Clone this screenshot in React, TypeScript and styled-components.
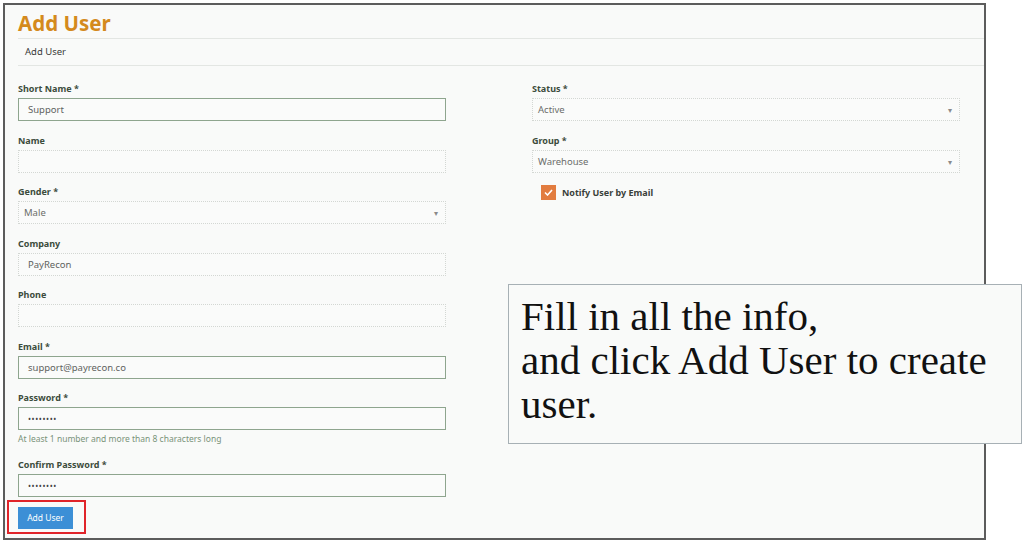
import React from 'react';
import styled, { createGlobalStyle } from 'styled-components';

const GlobalStyle = createGlobalStyle`
  html, body {
    margin: 0;
    padding: 0;
    background: #ffffff;
  }
  body {
    font-family: 'Noto Sans', 'Open Sans', Arial, sans-serif;
  }
`;

const Page = styled.div`
  position: relative;
  width: 1024px;
  height: 542px;
  overflow: hidden;
`;

const Frame = styled.div`
  box-sizing: border-box;
  margin: 3px 0 0 3px;
  width: 983px;
  height: 537px;
  border: 2px solid #5c5c5c;
  background: #f9faf9;
  padding: 0 0 0 13px;
`;

const Title = styled.h1`
  margin: 0;
  height: 33px;
  line-height: 36px;
  font-size: 20.5px;
  font-weight: 700;
  color: #d48a1d;
  border-bottom: 1px solid #e3e6e3;
`;

const Breadcrumb = styled.div`
  height: 26px;
  line-height: 26px;
  padding-left: 7px;
  font-size: 9.5px;
  color: #3a3a3a;
  border-bottom: 1px solid #e3e6e3;
`;

const FormGrid = styled.form`
  display: grid;
  grid-template-columns: 428px 428px;
  column-gap: 86px;
  padding-top: 16px;
  align-items: start;
`;

const Column = styled.div`
  display: flex;
  flex-direction: column;
`;

const Field = styled.div`
  display: flex;
  flex-direction: column;
  margin-bottom: 12.5px;
`;

const Label = styled.label`
  line-height: 14px;
  height: 14px;
  margin-bottom: 2px;
  font-size: 9px;
  font-weight: 700;
  color: #3c4c3c;
`;

const Input = styled.div<{ $filled?: boolean }>`
  position: relative;
  box-sizing: border-box;
  height: 23px;
  line-height: 21px;
  padding: 0 0 0 9px;
  font-size: 9.5px;
  color: #5e625e;
  background: #fafbfa;
  border: 1px ${({ $filled }) => ($filled ? 'solid #8ea58e' : 'dotted #d3d7d3')};
`;

const Select = styled(Input)`
  padding-left: 5px;
  color: #6a6d6a;
  &::after {
    content: '▾';
    position: absolute;
    right: 7px;
    top: 0;
    font-size: 8px;
    color: #8a8a8a;
  }
`;

const Dots = styled.span`
  font-size: 8px;
  letter-spacing: 0.6px;
  color: #444;
`;

const Hint = styled.div`
  margin-top: 3px;
  height: 12px;
  line-height: 12px;
  font-size: 8.5px;
  color: #7a937a;
`;

const ButtonWrap = styled.div`
  position: relative;
  margin-top: -2.5px;
  align-self: flex-start;
  &::after {
    content: '';
    position: absolute;
    left: -11px;
    top: -7px;
    width: 79px;
    height: 34px;
    box-sizing: border-box;
    border: 2px solid #e0242a;
    pointer-events: none;
  }
`;

const Button = styled.button`
  display: block;
  box-sizing: border-box;
  width: 55px;
  height: 22px;
  padding: 0;
  border: none;
  background: #3c8fd6;
  color: #ffffff;
  font-family: inherit;
  font-size: 8.5px;
`;

const CheckRow = styled.label`
  display: flex;
  align-items: center;
  gap: 6px;
  margin: 0 0 0 9px;
  font-size: 9px;
  font-weight: 700;
  color: #3a3f3a;
`;

const CheckBox = styled.span`
  display: flex;
  align-items: center;
  justify-content: center;
  width: 15px;
  height: 15px;
  background: #e27c3f;
`;

const Callout = styled.div`
  position: absolute;
  left: 508px;
  top: 284px;
  box-sizing: border-box;
  width: 514px;
  height: 160px;
  padding: 9px 12px;
  border: 1px solid #a7b0b5;
  background: #f9faf9;
  font-family: 'Liberation Serif', 'DejaVu Serif', serif;
  font-size: 41px;
  line-height: 44px;
  color: #111111;
`;

type FieldDef = {
  label: string;
  value?: string;
  filled?: boolean;
  select?: boolean;
  password?: boolean;
  hint?: string;
};

const leftFields: FieldDef[] = [
  { label: 'Short Name *', value: 'Support', filled: true },
  { label: 'Name' },
  { label: 'Gender *', value: 'Male', select: true },
  { label: 'Company', value: 'PayRecon' },
  { label: 'Phone' },
  { label: 'Email *', value: 'support@payrecon.co', filled: true },
  {
    label: 'Password *',
    password: true,
    filled: true,
    hint: 'At least 1 number and more than 8 characters long',
  },
  { label: 'Confirm Password *', password: true, filled: true },
];

const rightFields: FieldDef[] = [
  { label: 'Status *', value: 'Active', select: true },
  { label: 'Group *', value: 'Warehouse', select: true },
];

const FormField: React.FC<{ f: FieldDef }> = ({ f }) => {
  const Box = f.select ? Select : Input;
  return (
    <Field>
      <Label>{f.label}</Label>
      <Box $filled={f.filled}>
        {f.password ? <Dots>••••••••</Dots> : f.value}
      </Box>
      {f.hint && <Hint>{f.hint}</Hint>}
    </Field>
  );
};

export default function App() {
  return (
    <Page>
      <GlobalStyle />
      <Frame>
        <Title>Add User</Title>
        <Breadcrumb>Add User</Breadcrumb>
        <FormGrid>
          <Column>
            {leftFields.map((f) => (
              <FormField key={f.label} f={f} />
            ))}
            <ButtonWrap>
              <Button type="button">Add User</Button>
            </ButtonWrap>
          </Column>
          <Column>
            {rightFields.map((f) => (
              <FormField key={f.label} f={f} />
            ))}
            <CheckRow>
              <CheckBox>
                <svg width="9" height="7" viewBox="0 0 9 7">
                  <path d="M1 3.5 L3.5 6 L8 1" fill="none" stroke="#fff" strokeWidth="1.6" />
                </svg>
              </CheckBox>
              Notify User by Email
            </CheckRow>
          </Column>
        </FormGrid>
      </Frame>
      <Callout>
        Fill in all the info,
        <br />
        and click Add User to create user.
      </Callout>
    </Page>
  );
}
